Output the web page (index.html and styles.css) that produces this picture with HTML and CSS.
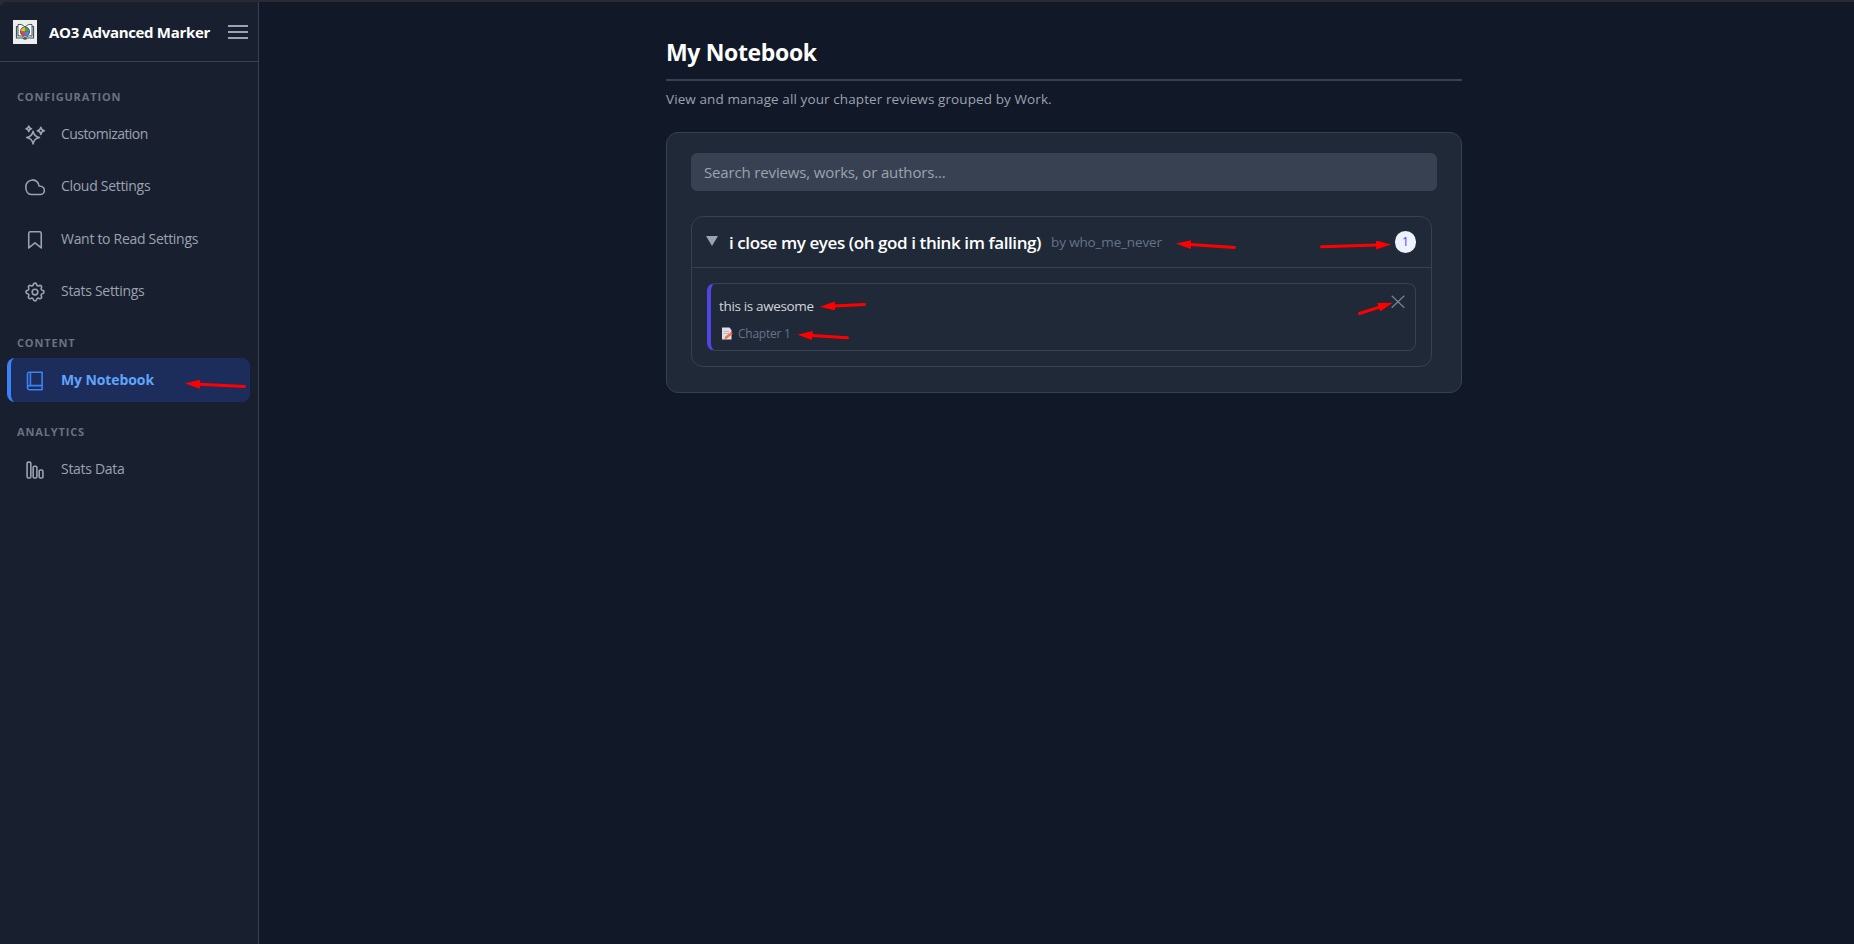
FILE: index.html
```
<!DOCTYPE html>
<html lang="en">
<head>
    <meta charset="UTF-8">
    <meta name="viewport" content="width=device-width, initial-scale=1.0">
    <title>AO3 Advanced Marker</title>
    <link rel="stylesheet" href="styles.css">
</head>
<body>

<div class="app">
    <aside class="sidebar">
        <div class="sidebar-header">
            <svg class="logo" viewBox="0 0 24 24">
                <rect width="24" height="24" fill="#eeeeee"/>
                <path d="M5 4.500 C8 4 10 5 12 7 C14 5 16 4 19 4.500 V16 C16 15.500 14 16 12 18 C10 16 8 15.500 5 16 Z" fill="#ffffff" stroke="#46525f" stroke-width="1"/>
                <path d="M5 6.500 H3.500 V18 H10 Q12 20 14 18 H20.500 V6.500 H19" fill="none" stroke="#46525f" stroke-width="1.200"/>
                <circle cx="12" cy="11.500" r="5" fill="#46525f"/>
                <path d="M12 11.500 V7.300 A4.200 4.200 0 0 0 7.800 11.500 Z" fill="#fbbc05"/>
                <path d="M12 11.500 H16.200 A4.200 4.200 0 0 0 12 7.300 Z" fill="#34a853"/>
                <path d="M12 11.500 V15.700 A4.200 4.200 0 0 0 16.200 11.500 Z" fill="#4285f4"/>
                <path d="M12 11.500 H7.800 A4.200 4.200 0 0 0 12 15.700 Z" fill="#e94335"/>
            </svg>
            <span class="brand">AO3 Advanced Marker</span>
            <button class="menu-toggle" aria-label="Toggle menu">
                <span></span><span></span><span></span>
            </button>
        </div>

        <nav class="nav">
            <h3 class="nav-label">CONFIGURATION</h3>
            <a class="nav-item" href="#">
                <svg class="icon" viewBox="0 0 24 24"><path d="M9.700 7.500 C10.600 12.300 12.500 14.200 17.300 15 C12.500 15.800 10.600 17.700 9.700 22.700 C8.800 17.700 6.900 15.800 2 15 C6.900 14.200 8.800 12.300 9.700 7.500 Z M4.500 1.200 C4.900 3.300 5.700 4.100 7.800 4.500 C5.700 4.900 4.900 5.700 4.500 7.800 C4.100 5.700 3.300 4.900 1.200 4.500 C3.300 4.100 4.100 3.300 4.500 1.200 Z M19 2.700 C19.500 5.400 20.500 6.500 23.200 7 C20.500 7.500 19.500 8.600 19 11.300 C18.500 8.600 17.500 7.500 14.800 7 C17.500 6.500 18.500 5.400 19 2.700 Z"/></svg>
                <span class="tight">Customization</span>
            </a>
            <a class="nav-item" href="#">
                <svg class="icon" viewBox="0 0 24 24"><path d="M7.500 21 H18 A5 5 0 0 0 18.500 11 A4.500 4.500 0 0 0 16.800 10.800 A7.800 7.800 0 0 0 9 3.500 A8.200 8.200 0 0 0 1 12 C1 17 3.500 21 7.500 21 Z"/></svg>
                <span>Cloud Settings</span>
            </a>
            <a class="nav-item" href="#">
                <svg class="icon" viewBox="0 0 24 24"><path d="M4.500 21.500 V4 A2 2 0 0 1 6.500 2 H17.500 A2 2 0 0 1 19.500 4 V21.500 L12 15.500 Z"/></svg>
                <span>Want to Read Settings</span>
            </a>
            <a class="nav-item" href="#">
                <svg class="icon" viewBox="0 0 24 24"><circle cx="12" cy="12" r="3.400"/><path d="M10 3.300 A2 2 0 0 1 14 3.300 A1.900 1.900 0 0 0 16.800 4.500 A2 2 0 0 1 19.600 7.300 A1.900 1.900 0 0 0 20.800 10 A2 2 0 0 1 20.800 14 A1.900 1.900 0 0 0 19.600 16.800 A2 2 0 0 1 16.800 19.600 A1.900 1.900 0 0 0 14 20.800 A2 2 0 0 1 10 20.800 A1.900 1.900 0 0 0 7.200 19.600 A2 2 0 0 1 4.400 16.800 A1.900 1.900 0 0 0 3.200 14 A2 2 0 0 1 3.200 10 A1.900 1.900 0 0 0 4.400 7.300 A2 2 0 0 1 7.200 4.500 A1.900 1.900 0 0 0 10 3.300 Z"/></svg>
                <span>Stats Settings</span>
            </a>

            <h3 class="nav-label">CONTENT</h3>
            <a class="nav-item active" href="#">
                <svg class="icon" viewBox="0 0 24 24"><path d="M5 1.500 H20.500 V22.500 H5 A2 2 0 0 1 3 20.500 V3.500 A2 2 0 0 1 5 1.500 Z M6.500 1.500 V17.500 M20.500 17.500 H5.500 A2.500 2.500 0 0 0 3 20"/></svg>
                <span>My Notebook</span>
            </a>

            <h3 class="nav-label">ANALYTICS</h3>
            <a class="nav-item" href="#">
                <svg class="icon" viewBox="0 0 24 24"><rect x="2.500" y="2.500" width="4.500" height="19" rx="1.500"/><rect x="9.800" y="7.500" width="4.500" height="14" rx="1.500"/><rect x="17" y="12" width="4.500" height="9.500" rx="1.500"/></svg>
                <span>Stats Data</span>
            </a>
        </nav>
    </aside>

    <main class="main">
        <h1 class="page-title">My Notebook</h1>
        <p class="page-desc">View and manage all your chapter reviews grouped by Work.</p>

        <section class="card">
            <input type="text" class="search-bar" placeholder="Search reviews, works, or authors...">

            <div class="work">
                <div class="work-header">
                    <span class="caret"></span>
                    <span class="work-title">i close my eyes (oh god i think im falling)</span>
                    <span class="work-author">by who_me_never</span>
                    <span class="badge">1</span>
                </div>
                <div class="work-body">
                    <div class="review">
                        <div>
                            <p class="review-text">this is awesome</p>
                            <p class="review-meta">
                                <svg class="note" viewBox="0 0 12 13"><path d="M1 0.500 H8.500 L10.500 3 V12.500 H1 Z" fill="#e3dce8"/><path d="M2.500 4.500 H8 M2.500 6.500 H8" stroke="#b9b0c2" stroke-width="0.800"/><path d="M3.500 12 L4 9.800 L9.500 5.500 L11.200 7.200 L5.700 11.700 Z" fill="#f2743c"/><path d="M9.500 5.500 L10.300 4.900 L12 6.600 L11.200 7.200 Z" fill="#e5484d"/></svg>
                                <span>Chapter 1</span>
                            </p>
                        </div>
                        <button class="delete" aria-label="Delete review">
                            <svg viewBox="0 0 14 14"><path d="M0.700 0.700 L13.300 12.700 M13.300 0.700 L0.700 12.700"/></svg>
                        </button>
                    </div>
                </div>
            </div>
        </section>
    </main>
</div>

<!-- Pointers over the page -->
<svg class="arrows" viewBox="0 0 1854 944">
    <defs>
        <marker id="head" markerUnits="userSpaceOnUse" markerWidth="15" markerHeight="9" refX="1" refY="4.500" orient="auto">
            <path d="M0 0 L15 4.500 L0 9 Z"/>
        </marker>
    </defs>
    <path class="arrow" d="M244.500 386.500 L199 384.200"/>
    <path class="arrow" d="M1234.500 247.500 L1190 244.500"/>
    <path class="arrow" d="M1321.500 246.700 L1377 245"/>
    <path class="arrow" d="M864.500 304.600 L834 306"/>
    <path class="arrow" d="M847.500 337.700 L811.500 335.500"/>
    <path class="arrow" d="M1359.500 313.500 L1379.500 307.100"/>
</svg>

</body>
</html>
```
FILE: styles.css
```
* {
    box-sizing: border-box;
}

body {
    margin: 0;
    background-color: #2b2a33;
    font-family: "Open Sans", "Noto Sans", sans-serif;
    color: #d1d5db;
    overflow: hidden;
}

h1, h3, p {
    margin: 0;
}

button {
    padding: 0;
    border: none;
    background: none;
    cursor: pointer;
}

.app {
    display: flex;
    height: calc(100vh - 2px);
    margin-top: 2px;
    border-top-left-radius: 8px;
    background-color: #111827;
    overflow: hidden;
}

/* Sidebar */
.sidebar {
    flex: 0 0 259px;
    background-color: #181f2e;
    border-right: 1px solid #374151;
}

.sidebar-header {
    display: flex;
    align-items: center;
    height: 60px;
    padding: 0 10px 0 13px;
    border-bottom: 1px solid #374151;
}

.logo {
    width: 24px;
    height: 24px;
}

.brand {
    margin-left: 12px;
    font-size: 15px;
    font-weight: 700;
    letter-spacing: -0.32px;
    color: #ffffff;
    white-space: nowrap;
}

.menu-toggle {
    display: flex;
    flex-direction: column;
    gap: 4px;
    width: 20px;
    margin-left: auto;
}

.menu-toggle span {
    height: 2px;
    background-color: #9ca3af;
}

.nav {
    padding: 27px 8px 0 7px;
}

.nav-label {
    height: 16px;
    margin: 0 0 7px 10px;
    font-size: 11px;
    line-height: 16px;
    font-weight: 700;
    letter-spacing: 0.85px;
    color: #6b7280;
}

.nav-item {
    display: flex;
    align-items: center;
    gap: 16px;
    height: 44px;
    margin-bottom: 8.400px;
    padding-left: 14px;
    border-left: 4px solid transparent;
    border-radius: 8px;
    font-size: 14px;
    letter-spacing: -0.3px;
    color: #9ca3af;
    text-decoration: none;
}

.nav-item + .nav-label {
    margin-top: 22px;
}

.nav-item span {
    margin-bottom: 1px;
}

.nav-item .tight {
    letter-spacing: -0.55px;
}

.nav-item.active {
    background-color: #1c2c5b;
    border-left-color: #3b82f6;
    color: #60a5fa;
    font-weight: 700;
    letter-spacing: -0.1px;
}

.icon {
    width: 20px;
    height: 20px;
    margin-top: 2px;
    fill: none;
    stroke: #9ca3af;
    stroke-width: 1.900;
    stroke-linejoin: round;
}

.active .icon {
    stroke: #3b82f6;
}

/* Main content */
.main {
    width: 796px;
    margin-left: 407px;
    padding-top: 31px;
}

.page-title {
    height: 48px;
    border-bottom: 2px solid #374151;
    font-size: 23px;
    line-height: 38px;
    font-weight: 700;
    letter-spacing: -0.35px;
    color: #ffffff;
}

.page-desc {
    margin: 8px 0 23px;
    font-size: 13.500px;
    line-height: 20px;
    letter-spacing: 0.1px;
    color: #9ca3af;
}

.card {
    height: 261px;
    padding: 20px 24px;
    background-color: #1f2937;
    border: 1px solid #374151;
    border-radius: 12px;
}

.search-bar {
    display: block;
    width: 100%;
    height: 38px;
    padding: 0 12px;
    background-color: #374151;
    border: 1px solid #374151;
    border-radius: 6px;
    font-family: inherit;
    font-size: 15px;
    letter-spacing: -0.15px;
}

.search-bar::placeholder {
    color: #9ca3af;
}

.work {
    width: 741px;
    margin-top: 25px;
    border: 1px solid #374151;
    border-radius: 12px;
}

.work-header {
    display: flex;
    align-items: center;
    height: 51px;
    padding: 0 15px 0 14px;
    border-bottom: 1px solid #374151;
}

.caret {
    margin-top: -2px;
    border-top: 10px solid #9ca3af;
    border-left: 6px solid transparent;
    border-right: 6px solid transparent;
}

.work-title {
    margin-left: 11px;
    font-size: 17px;
    font-weight: 600;
    letter-spacing: -0.41px;
    color: #ffffff;
}

.work-author {
    margin-left: 10px;
    font-size: 13.500px;
    letter-spacing: -0.15px;
    color: #64748b;
}

.badge {
    width: 21px;
    height: 22px;
    margin-left: auto;
    border-radius: 11px;
    background-color: #eef2ff;
    color: #4f46e5;
    font-size: 12px;
    line-height: 22px;
    text-align: center;
}

.work-body {
    padding: 15px;
}

.review {
    display: flex;
    justify-content: space-between;
    height: 68px;
    padding: 12px 10px 0 8px;
    border: 1px solid #374151;
    border-left: 4px solid #4f46e5;
    border-radius: 8px;
}

.review-text {
    font-size: 13.500px;
    line-height: 20px;
    letter-spacing: -0.35px;
    color: #d1d5db;
}

.review-meta {
    display: flex;
    align-items: center;
    gap: 5px;
    height: 18px;
    margin: 8px 0 0 2px;
    font-size: 12px;
    letter-spacing: -0.25px;
    color: #64748b;
}

.note {
    width: 12px;
    height: 13px;
}

.delete {
    width: 14px;
    height: 14px;
    margin-top: -1px;
}

.delete svg {
    display: block;
    fill: none;
    stroke: #7b8492;
    stroke-width: 1.200;
}

.arrows {
    position: absolute;
    top: 0;
    left: 0;
    width: 1854px;
    height: 944px;
    pointer-events: none;
    fill: #ff0000;
}

.arrow {
    stroke: #ff0000;
    stroke-width: 3;
    stroke-linecap: round;
    marker-end: url(#head);
}

.arrows marker path {
    stroke: none;
}
```
